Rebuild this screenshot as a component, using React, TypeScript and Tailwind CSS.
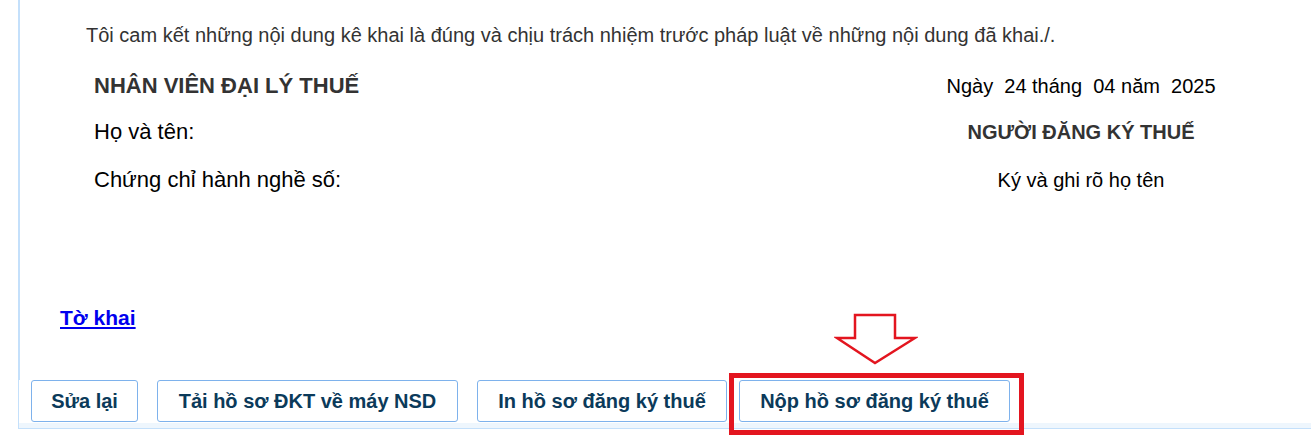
const border = "border-[#c4e0fb]";

function ActionButton({ label, width, className = "" }: { label: string; width: string; className?: string }) {
  return (
    <button
      className={`h-[42px] ${width} rounded-[3px] border border-[#7eb2ec] bg-white text-[20px] font-bold text-[#0b3a5a] ${className}`}
    >
      {label}
    </button>
  );
}

export default function App() {
  return (
    <div className="relative h-[437px] w-[1311px] overflow-hidden bg-white font-['Liberation_Sans',Arial,sans-serif]">
      <div className={`ml-[18px] flex h-[429px] flex-col border-b border-l ${border}`}>
        {/* Declaration */}
        <div className={`flex-1 border-l ${border}`}>
          <p className="pl-[66px] pt-[23px] text-[20px] leading-[24px] text-[#333]">
            Tôi cam kết những nội dung kê khai là đúng và chịu trách nhiệm trước pháp luật về những nội dung đã khai./.
          </p>

          <div className="mt-[27px] flex">
            <div className="flex flex-col pl-[74px] text-[22px] leading-[24px]">
              <div className="h-[46px] font-bold text-[#333]">NHÂN VIÊN ĐẠI LÝ THUẾ</div>
              <div className="h-[48px] text-black">Họ và tên:</div>
              <div className="h-[24px] text-black">Chứng chỉ hành nghề số:</div>
            </div>
            <div className="ml-auto mr-[85px] flex w-[290px] flex-col items-center text-[20px] leading-[24px]">
              <div className="h-[46px] whitespace-pre text-black">Ngày  24 tháng  04 năm  2025</div>
              <div className="h-[48px] font-bold text-[#333]">NGƯỜI ĐĂNG KÝ THUẾ</div>
              <div className="h-[24px] text-black">Ký và ghi rõ họ tên</div>
            </div>
          </div>

          <a href="#" className="ml-[40px] mt-[114px] inline-block text-[21px] font-bold leading-[24px] text-[#0000ee] underline">
            Tờ khai
          </a>
        </div>

        {/* Actions */}
        <div className="flex h-[43px] items-start pl-[12px]">
          <ActionButton label="Sửa lại" width="w-[107px]" />
          <ActionButton label="Tải hồ sơ ĐKT về máy NSD" width="w-[301px]" className="ml-[19px]" />
          <ActionButton label="In hồ sơ đăng ký thuế" width="w-[250px]" className="ml-[19px]" />
          <ActionButton label="Nộp hồ sơ đăng ký thuế" width="w-[271px]" className="ml-[12px]" />
        </div>
        <div className="h-[5px] bg-[#eef6fd]" />
      </div>

      {/* Highlight annotation */}
      <div className="absolute left-[729px] top-[373px] h-[62px] w-[295px] border-[5px] border-[#e3151f]" />
      <svg className="absolute left-[834px] top-[313px]" width="84" height="52" viewBox="0 0 84 52">
        <path d="M21 2 H61 V25 H81 L41 50 L3 25 H21 Z" fill="none" stroke="#e3151f" strokeWidth="2.5" />
      </svg>
    </div>
  );
}
